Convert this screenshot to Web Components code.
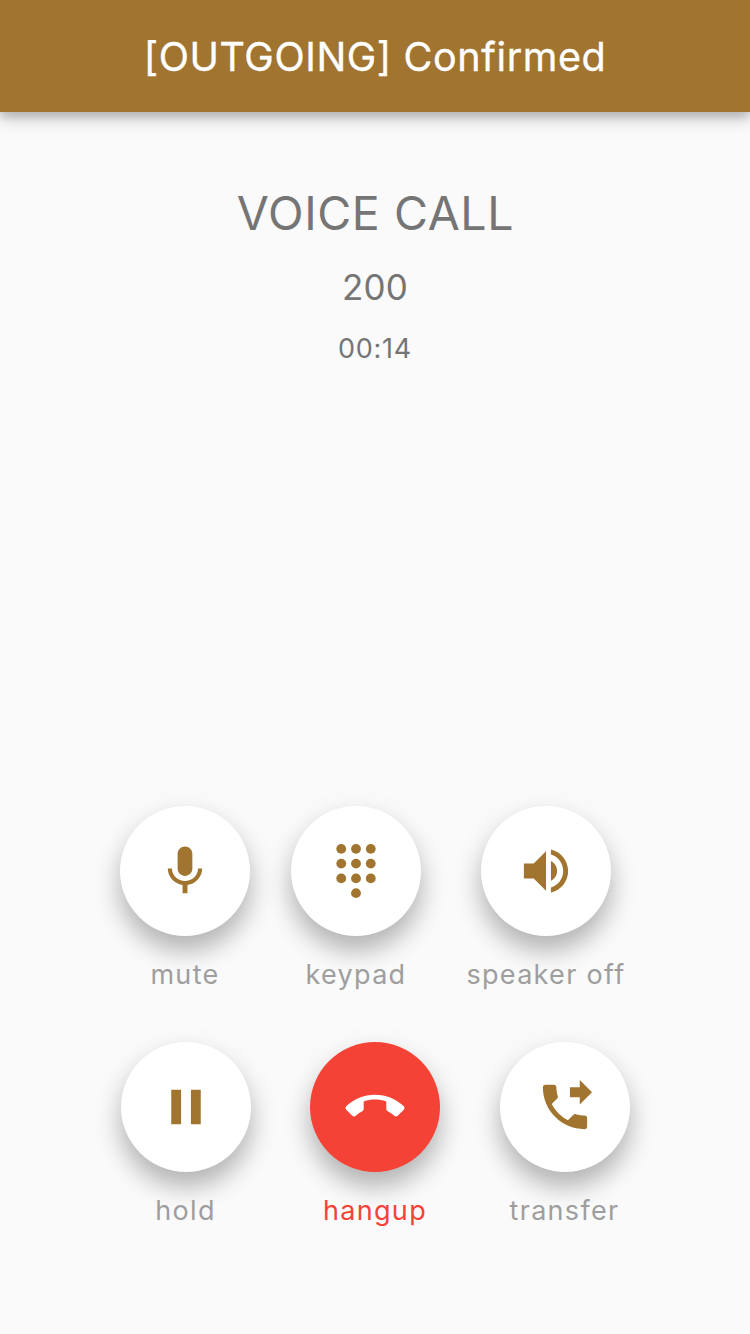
<!DOCTYPE html>
<html lang="en">
<head>
<meta charset="utf-8">
<title>Voice call</title>
<style>
html,body{margin:0;height:100%}
body{background:#fafafa;font-family:Inter,"Liberation Sans",sans-serif;overflow:hidden}
</style>
</head>
<body>
<call-screen></call-screen>
<script>
const define = (name, html) => {
  const tpl = document.createElement('template');
  tpl.innerHTML = html;
  customElements.define(name, class extends HTMLElement {
    constructor() {
      super();
      this.attachShadow({ mode: 'open' }).append(tpl.content.cloneNode(true));
    }
  });
};

define('app-bar', `
<style>
:host{display:flex;align-items:center;justify-content:center;height:112px;background:#a1752f;color:#fff;
box-shadow:0 5px 8px rgba(0,0,0,.12),0 6px 16px rgba(0,0,0,.22)}
span{font-size:39.5px;font-weight:400;-webkit-text-stroke:.35px #fff;letter-spacing:.6px;white-space:nowrap;padding-top:1px}
</style><span><slot></slot></span>`);

define('call-info', `
<style>
:host{display:flex;flex-direction:column;align-items:center;padding-top:71px;color:#757575;white-space:nowrap}
.title{font-size:46.5px;line-height:60px;letter-spacing:.6px;padding-left:1px}
.number{font-size:35px;line-height:48px;margin-top:20px;letter-spacing:.2px}
.time{font-size:27px;line-height:36px;margin-top:20px;letter-spacing:.7px}
</style>
<div class="title"><slot name="title"></slot></div>
<div class="number"><slot name="number"></slot></div>
<div class="time"><slot name="time"></slot></div>`);

const icons = {
  mic: '<path d="M12 14c1.66 0 2.99-1.34 2.99-3L15 5c0-1.66-1.34-3-3-3S9 3.34 9 5v6c0 1.66 1.34 3 3 3zm5.3-3c0 3-2.54 5.1-5.3 5.1S6.7 14 6.7 11H5c0 3.41 2.72 6.23 6 6.72V21h2v-3.28c3.28-.48 6-3.3 6-6.72h-1.7z"/>',
  dialpad: [[6,3],[12,3],[18,3],[6,9],[12,9],[18,9],[6,15],[12,15],[18,15],[12,21]]
    .map(([x, y]) => `<circle cx="${x}" cy="${y}" r="2"/>`).join(''),
  volume: '<path d="M3 9v6h4l5 5V4L7 9H3zm13.5 3c0-1.77-1.02-3.29-2.5-4.03v8.05c1.48-.73 2.5-2.25 2.5-4.02zM14 3.23v2.06c2.89.86 5 3.54 5 6.71s-2.11 5.85-5 6.71v2.06c4.01-.91 7-4.49 7-8.77s-2.99-7.86-7-8.77z"/>',
  pause: '<path d="M6 19h4V5H6v14zm8-14v14h4V5h-4z"/>',
  end: '<path d="M12 9c-1.6 0-3.15.25-4.6.72v3.1c0 .39-.23.74-.56.9-.98.49-1.87 1.12-2.66 1.85-.18.18-.43.28-.7.28-.28 0-.53-.11-.71-.29L.29 13.08c-.18-.17-.29-.42-.29-.7 0-.28.11-.53.29-.71C3.34 8.78 7.46 7 12 7s8.66 1.78 11.71 4.67c.18.18.29.43.29.71 0 .28-.11.53-.29.71l-2.48 2.48c-.18.18-.43.29-.71.29-.27 0-.52-.11-.7-.28-.79-.74-1.69-1.36-2.67-1.85-.33-.16-.56-.5-.56-.9v-3.1C15.15 9.25 13.6 9 12 9z"/>',
  forward: '<path d="M18 11l5-5-5-5v3h-4v4h4v3zm2 4.5c-1.25 0-2.45-.2-3.57-.57-.35-.11-.74-.03-1.02.24l-2.2 2.2c-2.83-1.44-5.15-3.75-6.59-6.59l2.2-2.21c.28-.26.36-.65.25-1C8.7 6.45 8.5 5.25 8.5 4c0-.55-.45-1-1-1H4c-.55 0-1 .45-1 1 0 9.39 7.61 17 17 17 .55 0 1-.45 1-1v-3.5c0-.55-.45-1-1-1z"/>'
};

customElements.define('call-action', class extends HTMLElement {
  constructor() {
    super();
    this.attachShadow({ mode: 'open' }).innerHTML = `
<style>
:host{display:flex;flex-direction:column;align-items:center;color:#9e9e9e;--fill:#fff;--ink:#a1752f}
:host([danger]){color:#f44336;--fill:#f44336;--ink:#fff}
button{all:unset;display:flex;align-items:center;justify-content:center;width:130px;height:130px;border-radius:50%;background:var(--fill);
box-shadow:0 15px 23px rgba(0,0,0,.24),0 10px 36px rgba(0,0,0,.07)}
svg{display:block;width:60px;height:60px;fill:var(--ink)}
span{margin-top:21px;font-size:27px;line-height:36px;letter-spacing:1.3px;white-space:nowrap}
</style>
<button><svg viewBox="-.2 -.2 24.4 24.4">${icons[this.getAttribute('icon')]}</svg></button>
<span><slot></slot></span>`;
  }
});

define('action-row', `
<style>
:host{display:grid}
</style><slot></slot>`);

define('call-screen', `
<style>
:host{display:flex;flex-direction:column;height:1334px}
call-info{flex:1}
.rows{display:flex;flex-direction:column;gap:49px;padding:0 0 105px 120px}
.first{grid-template-columns:130px 212px 168px}
.second{grid-template-columns:131px 248px 131px}
</style>
<app-bar>[OUTGOING] Confirmed</app-bar>
<call-info><span slot="title">VOICE CALL</span><span slot="number">200</span><span slot="time">00:14</span></call-info>
<div class="rows">
<action-row class="first">
<call-action icon="mic">mute</call-action><call-action icon="dialpad">keypad</call-action><call-action icon="volume">speaker off</call-action>
</action-row>
<action-row class="second">
<call-action icon="pause">hold</call-action><call-action icon="end" danger>hangup</call-action><call-action icon="forward">transfer</call-action>
</action-row>
</div>`);
</script>
</body>
</html>
